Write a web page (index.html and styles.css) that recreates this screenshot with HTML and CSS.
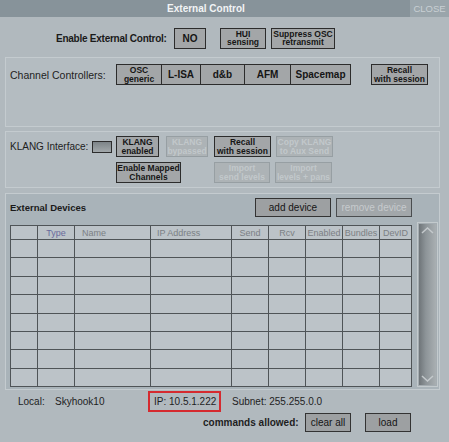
FILE: index.html
```html
<!DOCTYPE html>
<html lang="en">
<head>
    <meta charset="UTF-8">
    <title>External Control</title>
    <link rel="stylesheet" href="styles.css">
</head>
<body>
    <div class="window">
        <div class="titlebar">
            <div class="title">External Control</div>
            <div class="close">CLOSE</div>
        </div>

        <div class="enable-row">
            <span class="enable-label">Enable External Control:</span>
            <div class="btn btn-no">NO</div>
            <div class="btn two btn-hui">HUI<br>sensing</div>
            <div class="btn two btn-suppress">Suppress OSC<br>retransmit</div>
        </div>

        <div class="panel panel-channels">
            <div class="row">
                <span class="label label-channels">Channel Controllers:</span>
                <div class="group">
                    <div class="btn two w-osc">OSC<br>generic</div>
                    <div class="btn w-lisa">L-ISA</div>
                    <div class="btn w-db">d&amp;b</div>
                    <div class="btn w-afm">AFM</div>
                    <div class="btn w-space">Spacemap</div>
                </div>
                <div class="btn two w-recall ch-recall">Recall<br>with session</div>
            </div>
        </div>

        <div class="panel panel-klang">
            <div class="row">
                <span class="label label-klang">KLANG Interface:</span>
                <span class="led"></span>
                <div class="btn two w-kenabled">KLANG<br>enabled</div>
                <div class="btn two off w-kbypass">KLANG<br>bypassed</div>
                <div class="btn two w-krecall">Recall<br>with session</div>
                <div class="btn two off w-copy">Copy KLANG<br>to Aux Send</div>
            </div>
            <div class="row row2">
                <div class="btn two w-mapped">Enable Mapped<br>Channels</div>
                <div class="btn two off w-import1">Import<br>send levels</div>
                <div class="btn two off w-import2">Import<br>levels + pans</div>
            </div>
        </div>

        <div class="panel panel-devices">
            <div class="dev-head">
                <span class="dev-title">External Devices</span>
                <div class="btn flat w-add">add device</div>
                <div class="btn flat off-dark w-remove">remove device</div>
            </div>
            <div class="dev-body">
                <table class="devices">
                    <colgroup>
                        <col style="width:27px"><col style="width:37px"><col style="width:76px">
                        <col style="width:81px"><col style="width:37px"><col style="width:37px">
                        <col style="width:37px"><col style="width:37px"><col style="width:32px">
                    </colgroup>
                    <thead>
                        <tr>
                            <th></th>
                            <th class="c type">Type</th>
                            <th class="l name">Name</th>
                            <th class="l ip">IP Address</th>
                            <th class="c">Send</th>
                            <th class="c">Rcv</th>
                            <th class="c">Enabled</th>
                            <th class="c">Bundles</th>
                            <th class="c">DevID</th>
                        </tr>
                    </thead>
                    <tbody>
                        <tr><td></td><td></td><td></td><td></td><td></td><td></td><td></td><td></td><td></td></tr>
                        <tr><td></td><td></td><td></td><td></td><td></td><td></td><td></td><td></td><td></td></tr>
                        <tr><td></td><td></td><td></td><td></td><td></td><td></td><td></td><td></td><td></td></tr>
                        <tr><td></td><td></td><td></td><td></td><td></td><td></td><td></td><td></td><td></td></tr>
                        <tr><td></td><td></td><td></td><td></td><td></td><td></td><td></td><td></td><td></td></tr>
                        <tr><td></td><td></td><td></td><td></td><td></td><td></td><td></td><td></td><td></td></tr>
                        <tr><td></td><td></td><td></td><td></td><td></td><td></td><td></td><td></td><td></td></tr>
                        <tr><td></td><td></td><td></td><td></td><td></td><td></td><td></td><td></td><td></td></tr>
                    </tbody>
                </table>
                <div class="scroll">
                    <div class="thumb">
                        <svg class="arrow-up" width="13" height="7" viewBox="0 0 13 7"><path d="M1 6 L6.5 1 L12 6" fill="none" stroke="#c4c9cc" stroke-width="1.5"/></svg>
                        <svg class="arrow-down" width="13" height="7" viewBox="0 0 13 7"><path d="M1 1 L6.5 6 L12 1" fill="none" stroke="#c4c9cc" stroke-width="1.5"/></svg>
                    </div>
                </div>
            </div>
        </div>

        <div class="footer">
            <div class="info">
                <span class="local">Local:</span>
                <span class="host">Skyhook10</span>
                <span class="ip-box">IP: 10.5.1.222</span>
                <span class="subnet">Subnet: 255.255.0.0</span>
            </div>
            <div class="commands">
                <span class="cmd-label">commands allowed:</span>
                <div class="btn flat w-clear">clear all</div>
                <div class="btn flat w-load">load</div>
            </div>
        </div>
    </div>
</body>
</html>
```

FILE: styles.css
```css
body {
    margin: 0;
    font-family: 'Liberation Sans', Arial, sans-serif;
    background: #b1b9be;
    color: #1a1a1a;
}
.window {
    width: 449px;
    height: 442px;
    background: #b1b9be;
    overflow: hidden;
    white-space: nowrap;
}
.titlebar {
    display: flex;
    height: 17px;
    background: #87939a;
}
.title {
    flex: 1;
    text-align: center;
    color: #f2f4f5;
    font-weight: bold;
    font-size: 10px;
    line-height: 18px;
    padding-left: 2px;
}
.close {
    width: 39px;
    background: #9aa5ab;
    color: #c9d0d4;
    font-size: 9.5px;
    line-height: 18px;
    text-align: center;
}

/* buttons */
.btn {
    box-sizing: border-box;
    flex-shrink: 0;
    display: flex;
    align-items: center;
    justify-content: center;
    text-align: center;
    height: 21px;
    background: #a3a6a8;
    border: 1px solid #2c2c2c;
    font-weight: bold;
    font-size: 10px;
    color: #151515;
}
.btn.two {
    font-size: 8.5px;
    line-height: 8.5px;
}
.btn.off {
    background: #adb3b6;
    border-color: #979fa3;
    color: #c2c8cb;
}
.btn.flat {
    font-weight: normal;
    font-size: 10px;
    height: 19px;
    background: #9da0a2;
    border-color: #333;
}
.btn.off-dark {
    background: #a2a7aa;
    border-color: #4a4d4f;
    color: #c6cacd;
}

/* enable row */
.enable-row {
    display: flex;
    align-items: center;
    height: 40px;
    padding-left: 56px;
    padding-top: 2px;
    box-sizing: border-box;
}
.enable-label {
    flex-shrink: 0;
    font-weight: bold;
    font-size: 10px;
    letter-spacing: -0.25px;
    width: 118px;
}
.btn-no { width: 32px; }
.btn-hui { width: 46px; margin-left: 14px; }
.btn-suppress { width: 64px; margin-left: 5px; }

/* panels */
.panel {
    box-sizing: border-box;
    margin-left: 5px;
    width: 435px;
    background: #b4bcc1;
    border: 1px solid #c4cbcf;
}
.panel-channels {
    height: 70px;
    padding: 6px 0 0 4px;
}
.panel-klang {
    height: 57px;
    margin-top: 4px;
    padding: 4px 0 0 4px;
}
.panel-devices {
    height: 197px;
    margin-top: 5px;
    background: #a9b3b9;
    padding: 4px 0 0 3px;
}
.row {
    display: flex;
    align-items: center;
}
.label {
    flex-shrink: 0;
    font-size: 10.5px;
    color: #1e1e1e;
}
.label-channels { width: 106px; }
.group { display: flex; flex-shrink: 0; }
.group .btn + .btn { border-left: none; }
.w-osc { width: 46px; }
.w-lisa { width: 39px; }
.w-db { width: 44px; }
.w-afm { width: 46px; }
.w-space { width: 60px; }
.ch-recall { width: 57px; margin-left: 20px; }

.label-klang { width: 82px; font-size: 10px; }
.led {
    box-sizing: border-box;
    flex-shrink: 0;
    width: 20px;
    height: 12px;
    margin-right: 4px;
    border: 1px solid #2c2c2c;
    background: linear-gradient(#7d8488, #a2a8ab);
}
.w-kenabled { width: 43px; }
.w-kbypass { width: 42px; margin-left: 7px; }
.w-krecall { width: 57px; margin-left: 6px; }
.w-copy { width: 57px; margin-left: 5px; }
.row2 { margin-top: 5px; padding-left: 106px; }
.w-mapped { width: 65px; }
.w-import1 { width: 56px; margin-left: 33px; }
.w-import2 { width: 57px; margin-left: 5px; }

/* devices */
.dev-head {
    display: flex;
    align-items: center;
    height: 19px;
}
.dev-title {
    flex-shrink: 0;
    font-weight: bold;
    font-size: 9.5px;
    width: 245px;
    padding-left: 1px;
}
.w-add { width: 76px; }
.w-remove { width: 76px; margin-left: 5px; }
.dev-body {
    display: flex;
    align-items: flex-start;
    margin-top: 5px;
}
.devices {
    flex-shrink: 0;
    border-collapse: collapse;
    table-layout: fixed;
    width: 402px;
    margin-top: 3px;
    margin-left: 1px;
    background: #bcc3c8;
}
.devices th, .devices td {
    border: 1px solid #4f5457;
    padding: 0;
}
.devices th {
    height: 13px;
    font-weight: normal;
    font-size: 9px;
    color: #7b8084;
    overflow: hidden;
}
.devices td { height: 17.4px; }
.devices th.c { text-align: center; }
.devices th.l { text-align: left; }
.devices th.type { color: #6a6a9c; }
.devices th.name { padding-left: 7px; }
.devices th.ip { padding-left: 6px; }
.scroll {
    box-sizing: border-box;
    flex-shrink: 0;
    width: 21px;
    height: 165px;
    margin-left: 5px;
    border: 1px solid #c3cacd;
    background: #a4acb1;
    padding: 1px;
}
.thumb {
    position: relative;
    height: 100%;
    background: linear-gradient(to right, #6f7579, #8d9498 40%, #a9afb2);
}
.arrow-up { position: absolute; left: 2px; top: 3px; }
.arrow-down { position: absolute; left: 2px; bottom: 3px; }

/* footer */
.footer {
    font-size: 10px;
    color: #1e1e1e;
}
.info {
    display: flex;
    align-items: center;
    height: 22px;
    padding-left: 18px;
}
.local { width: 37px; flex-shrink: 0; }
.host { width: 93px; flex-shrink: 0; }
.ip-box {
    box-sizing: border-box;
    flex-shrink: 0;
    height: 21px;
    width: 73px;
    line-height: 17px;
    border: 2px solid #d52a2f;
    padding-left: 4px;
    margin-right: 11px;
}
.commands {
    display: flex;
    align-items: center;
    padding-top: 1px;
    padding-left: 203px;
}
.cmd-label {
    flex-shrink: 0;
    font-weight: bold;
    font-size: 10px;
    width: 102px;
}
.w-clear { width: 46px; height: 21px; }
.w-load { width: 46px; height: 21px; margin-left: 14px; }
```
